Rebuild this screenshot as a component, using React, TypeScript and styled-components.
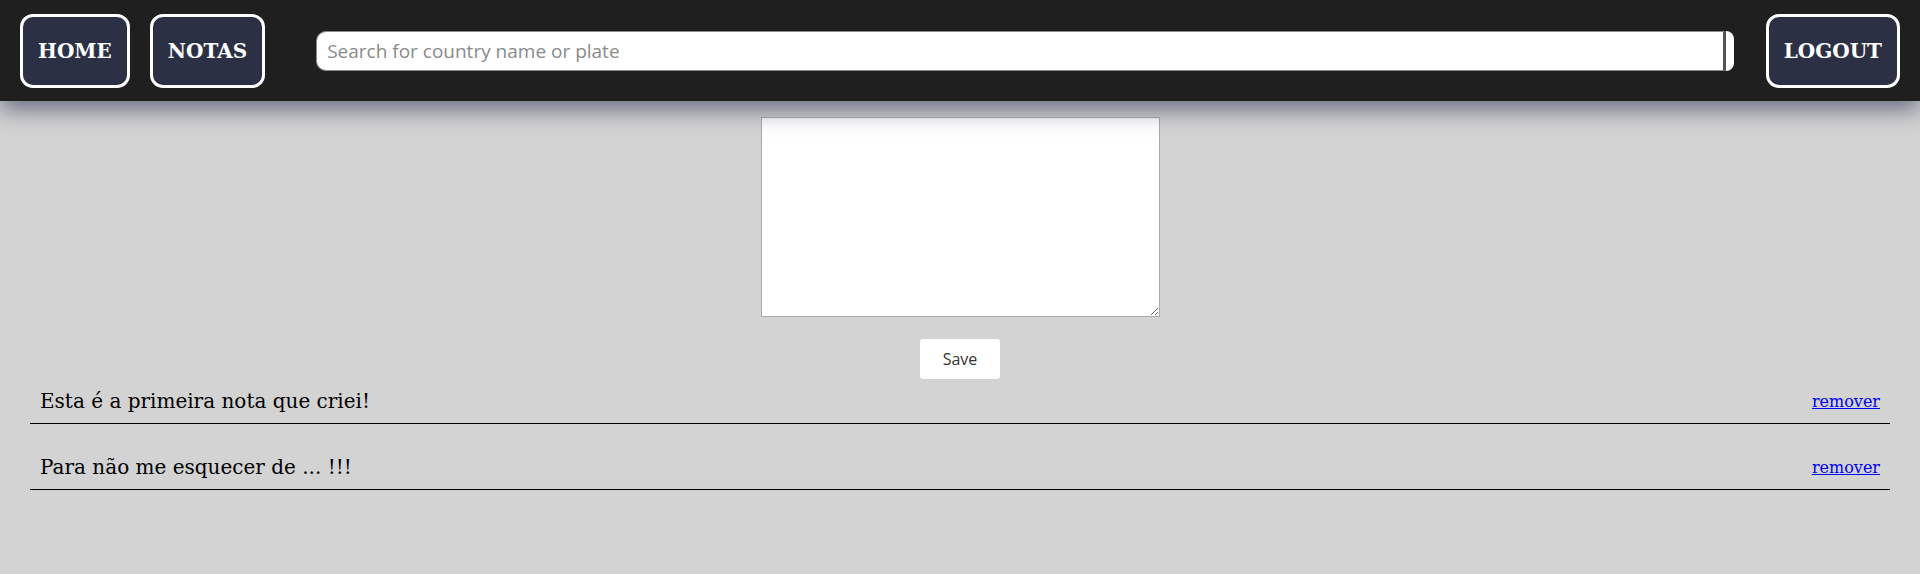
import styled, { createGlobalStyle } from 'styled-components'

const notes = [
  { id: 1, text: 'Esta é a primeira nota que criei!' },
  { id: 2, text: 'Para não me esquecer de ... !!!' },
]

const GlobalStyle = createGlobalStyle`
  html, body {
    margin: 0;
    padding: 0;
    background: #d3d3d3;
    font-family: "DejaVu Serif", serif;
  }
`

const App = () => {
  return (
    <>
      <GlobalStyle />
      <NavBar>
        <NavButton>HOME</NavButton>
        <NavButton>NOTAS</NavButton>
        <SearchForm onSubmit={(e) => e.preventDefault()}>
          <SearchInput placeholder='Search for country name or plate' />
          <SearchSubmit type='submit' />
        </SearchForm>
        <NavButton>LOGOUT</NavButton>
      </NavBar>

      <Editor>
        <NoteArea />
        <SaveButton>Save</SaveButton>
      </Editor>

      <NoteList>
        {notes.map((note) => (
          <NoteRow key={note.id}>
            <NoteText>{note.text}</NoteText>
            <RemoveLink href='#'>remover</RemoveLink>
          </NoteRow>
        ))}
      </NoteList>
    </>
  )
}

const NavBar = styled.nav`
  display: flex;
  align-items: center;
  height: 101px;
  box-sizing: border-box;
  padding: 0 20px;
  gap: 20px;
  background: #1f1f1f;
  box-shadow: 0 8px 22px rgba(84, 88, 112, 0.85);
  position: relative;
  z-index: 1;
`
const NavButton = styled.button`
  height: 74px;
  padding: 0 15px;
  box-sizing: border-box;
  background: #2b3045;
  color: #fff;
  border: 3px solid #fff;
  border-radius: 13px;
  font-family: "DejaVu Serif", serif;
  font-weight: 700;
  font-size: 20px;
  cursor: pointer;
`
const SearchForm = styled.form`
  flex: 1;
  display: flex;
  height: 40px;
  margin: 0 12px 0 31px;
`
const SearchInput = styled.input`
  flex: 1;
  box-sizing: border-box;
  height: 40px;
  padding: 0 10px;
  border: 1px solid #8c8c8c;
  border-right: 3px solid #555;
  border-radius: 10px 0 0 10px;
  background: #fff;
  font-family: "Open Sans", sans-serif;
  font-size: 19px;
  outline: none;
  &::placeholder {
    color: #8a8a8a;
  }
`
const SearchSubmit = styled.button`
  width: 8px;
  height: 40px;
  padding: 0;
  border: none;
  border-radius: 0 10px 10px 0;
  background: #fff;
`
const Editor = styled.section`
  display: flex;
  flex-direction: column;
  align-items: center;
  padding-top: 16px;
`
const NoteArea = styled.textarea`
  width: 399px;
  height: 200px;
  box-sizing: border-box;
  border: 1px solid #aaa;
  background: #fff;
  outline: none;
`
const SaveButton = styled.button`
  margin-top: 22px;
  width: 80px;
  height: 40px;
  border: none;
  border-radius: 3px;
  background: #fff;
  color: #333;
  font-family: "Open Sans", sans-serif;
  font-size: 16px;
  cursor: pointer;
`
const NoteList = styled.ul`
  list-style: none;
  margin: 0 30px;
  padding: 0;
`
const NoteRow = styled.li`
  display: flex;
  justify-content: space-between;
  align-items: center;
  padding: 10px 10px;
  margin-bottom: 21px;
  border-bottom: 1px solid #000;
`
const NoteText = styled.span`
  font-size: 20px;
  color: #000;
`
const RemoveLink = styled.a`
  font-size: 16px;
  color: #0000ee;
  text-decoration: underline;
`

export default App
